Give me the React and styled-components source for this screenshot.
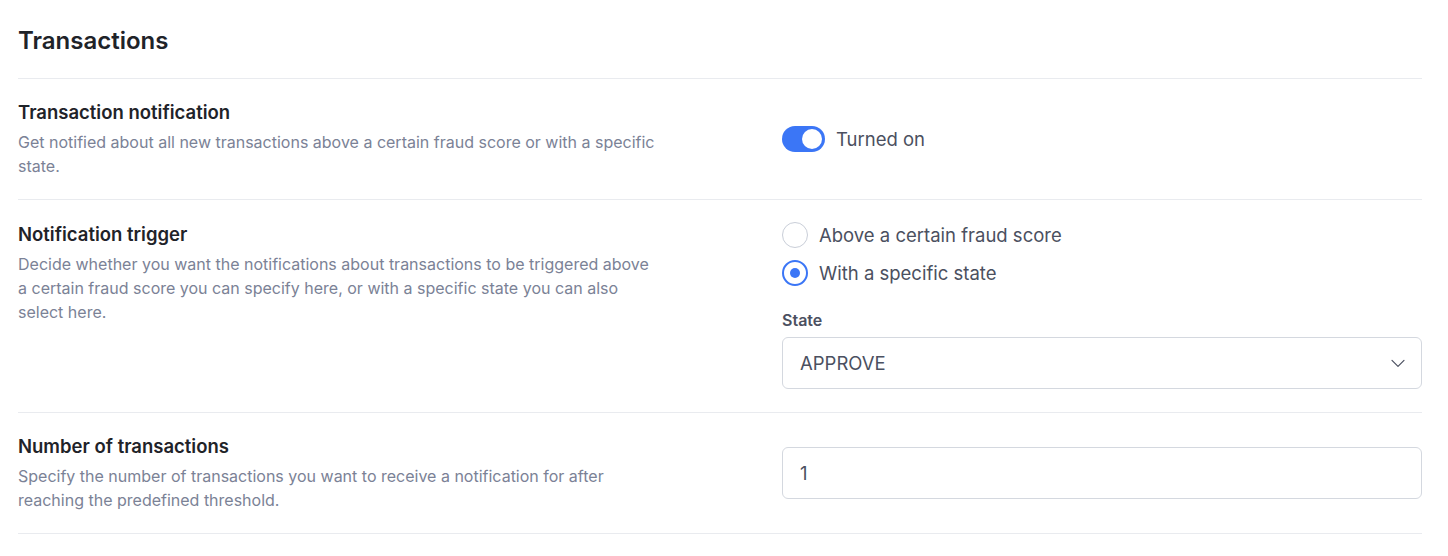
import styled, { createGlobalStyle } from "styled-components";

const Global = createGlobalStyle`
  body {
    margin: 0;
    background: #fff;
    font-family: Inter, "Noto Sans", sans-serif;
    color: #1f2329;
  }
`;

const Page = styled.div`
  padding: 21px 26px 0 18px;
`;

const Heading = styled.h1`
  margin: 0;
  font-size: 24px;
  font-weight: 600;
  line-height: 40px;
  padding-bottom: 17px;
  border-bottom: 1px solid #e9ebef;
  color: #1f2329;
`;

const Row = styled.div`
  display: grid;
  grid-template-columns: 640px 1fr;
  column-gap: 124px;
  align-items: ${(p) => (p.$top ? "start" : "center")};
  padding: ${(p) => (p.$top ? "22px 0 23px" : "21px 0 21px")};
  border-bottom: 1px solid #e9ebef;
`;

const Info = styled.div``;

const Title = styled.div`
  font-size: 18.5px;
  font-weight: 600;
  line-height: 24px;
  color: #1f2329;
  margin-bottom: 6px;
`;

const Desc = styled.p`
  margin: 0;
  font-size: 16px;
  line-height: 24px;
  color: #7b8296;
`;

const Control = styled.div`
  display: flex;
  flex-direction: column;
`;

const ToggleRow = styled.label`
  display: flex;
  align-items: center;
  gap: 11px;
  font-size: 18.5px;
  color: #4b5060;
`;

const Track = styled.span`
  width: 43px;
  height: 26px;
  border-radius: 13px;
  background: ${(p) => (p.$on ? "#3b76f6" : "#d0d5dd")};
  display: flex;
  align-items: center;
  justify-content: ${(p) => (p.$on ? "flex-end" : "flex-start")};
  padding: 0 3px;
  box-sizing: border-box;
`;

const Knob = styled.span`
  width: 20px;
  height: 20px;
  border-radius: 50%;
  background: #fff;
`;

const RadioGroup = styled.div`
  display: flex;
  flex-direction: column;
  gap: 12px;
`;

const RadioOption = styled.label`
  display: flex;
  align-items: center;
  gap: 11px;
  font-size: 18.5px;
  line-height: 26px;
  color: #4b5060;
`;

const RadioDot = styled.span`
  width: 26px;
  height: 26px;
  box-sizing: border-box;
  border-radius: 50%;
  border: ${(p) => (p.$checked ? "2px solid #3b76f6" : "1px solid #c9ced8")};
  display: flex;
  align-items: center;
  justify-content: center;
  &::after {
    content: "";
    width: 10px;
    height: 10px;
    border-radius: 50%;
    background: ${(p) => (p.$checked ? "#3b76f6" : "transparent")};
  }
`;

const FieldLabel = styled.div`
  margin-top: 24px;
  margin-bottom: 7px;
  font-size: 16px;
  font-weight: 600;
  line-height: 20px;
  color: #4b5060;
`;

const Box = styled.div`
  height: 52px;
  box-sizing: border-box;
  border: 1px solid #d4d8df;
  border-radius: 6px;
  padding: 0 14px 0 17px;
  display: flex;
  align-items: center;
  justify-content: space-between;
  font-size: 18.5px;
  color: #4b5060;
`;

const Chevron = () => (
  <svg width="18" height="18" viewBox="0 0 24 24" fill="none" stroke="#4b5060" strokeWidth="1.6" strokeLinecap="round" strokeLinejoin="round">
    <path d="M4 8.5l8 8 8-8" />
  </svg>
);

export default function App() {
  return (
    <>
      <Global />
      <Page>
        <Heading>Transactions</Heading>
        <Row>
          <Info>
            <Title>Transaction notification</Title>
            <Desc>
              Get notified about all new transactions above a certain fraud score or with a specific state.
            </Desc>
          </Info>
          <Control>
            <ToggleRow>
              <Track $on>
                <Knob />
              </Track>
              Turned on
            </ToggleRow>
          </Control>
        </Row>
        <Row $top>
          <Info>
            <Title>Notification trigger</Title>
            <Desc>
              Decide whether you want the notifications about transactions to be triggered above a certain fraud
              score you can specify here, or with a specific state you can also select here.
            </Desc>
          </Info>
          <Control>
            <RadioGroup>
              <RadioOption>
                <RadioDot />
                Above a certain fraud score
              </RadioOption>
              <RadioOption>
                <RadioDot $checked />
                With a specific state
              </RadioOption>
            </RadioGroup>
            <FieldLabel>State</FieldLabel>
            <Box>
              APPROVE
              <Chevron />
            </Box>
          </Control>
        </Row>
        <Row>
          <Info>
            <Title>Number of transactions</Title>
            <Desc>
              Specify the number of transactions you want to receive a notification for after reaching the predefined
              threshold.
            </Desc>
          </Info>
          <Control>
            <Box>1</Box>
          </Control>
        </Row>
      </Page>
    </>
  );
}
